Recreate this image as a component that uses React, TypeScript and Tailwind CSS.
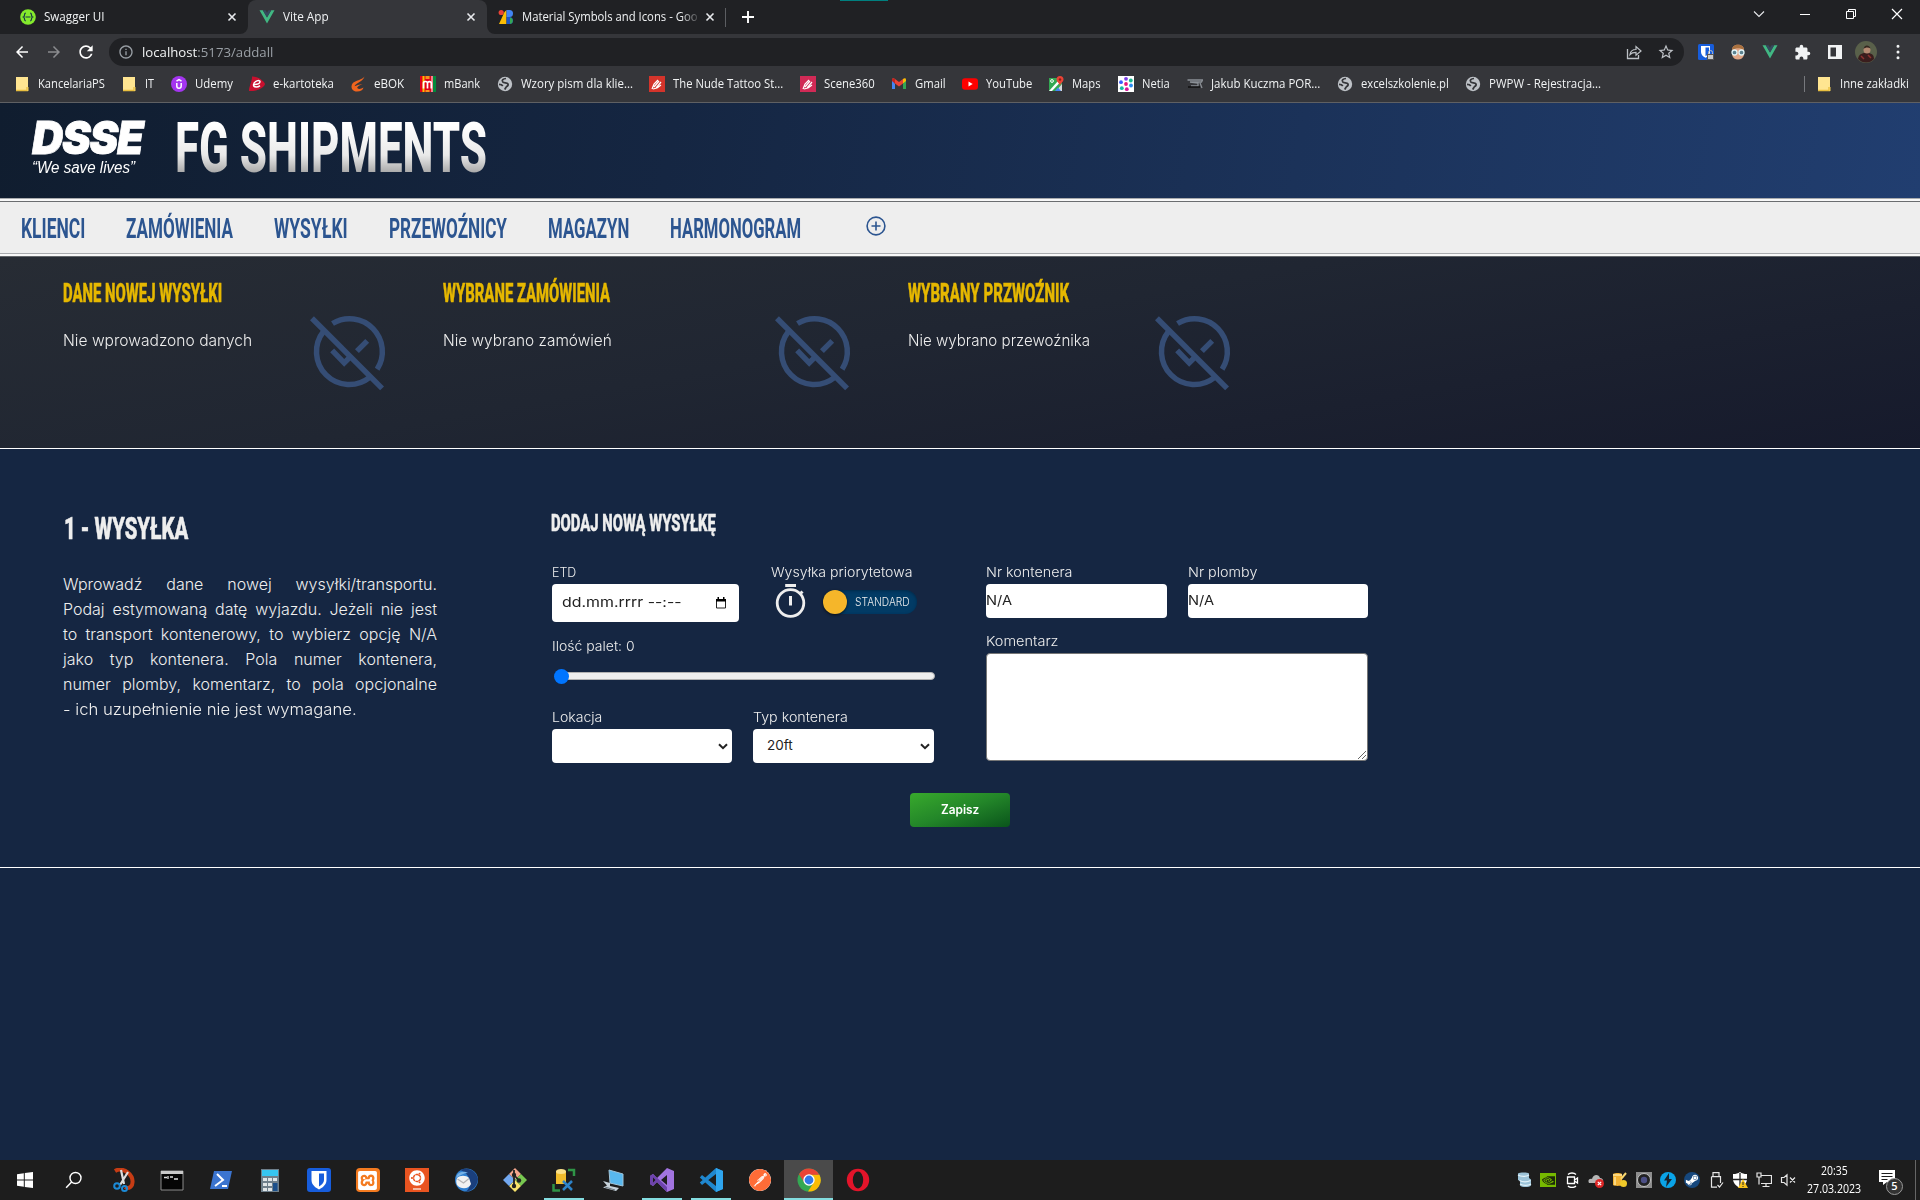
import React, { useLayoutEffect, useRef, useState } from 'react';
import { SiNvidia, SiPostman, SiXampp } from 'react-icons/si';
import { FaSteamSymbol, FaUbuntu } from 'react-icons/fa';
import { MdRefresh, MdArrowBack, MdArrowForward, MdStarBorder, MdInfoOutline, MdExtension } from 'react-icons/md';

/* Condenses or widens a single line of text so that it fills exactly `w` pixels. */
function Fit({ w, className = '', children }: { w: number; className?: string; children: React.ReactNode }) {
  const ref = useRef<HTMLSpanElement>(null);
  const [k, setK] = useState(1);
  useLayoutEffect(() => {
    if (ref.current) setK(w / ref.current.offsetWidth);
  }, [w]);
  return (
    <span className={'block shrink-0 whitespace-nowrap ' + className} style={{ width: w }}>
      <span ref={ref} className="inline-block origin-left whitespace-nowrap" style={{ transform: `scaleX(${k})` }}>
        {children}
      </span>
    </span>
  );
}

const Svg = ({ s = 16, vb = '0 0 16 16', className = '', children }: { s?: number; vb?: string; className?: string; children: React.ReactNode }) => (
  <svg width={s} height={s} viewBox={vb} fill="none" className={'block shrink-0 ' + className}>
    {children}
  </svg>
);

/* ---------- browser icons ---------- */
const Folder = () => (
  <Svg>
    <path d="M2 1h12v14H2z" fill="#ffe591" />
    <path d="M2 14.5h12M13 11v4" stroke="#e9bf3f" strokeWidth="1.3" />
    <path d="M13 11h1.5v4H13z" fill="#f3cd58" />
  </Svg>
);
const Globe = () => (
  <Svg>
    <circle cx="8" cy="8" r="7.2" fill="#bdc1c6" />
    <path d="M9 2.500c-3 .2-4.500 1.800-3.300 3.300 1.300 1.400 4.300.6 5.300 2.200.6 1.300-.6 2.200-1.600 2.800-.7.600-.9 1.800-1.800 2.700M2 8.300c1.800 0 3.200.5 3.800 1.700" stroke="#35363a" strokeWidth="1.7" />
  </Svg>
);
const Vue = () => (
  <Svg>
    <path d="M.5 1.200h3.300L8 8.400l4.200-7.200h3.300L8 14.600z" fill="#41b883" />
    <path d="M3.800 1.200h2.700L8 3.800l1.500-2.600h2.700L8 8.400z" fill="#35495e" />
  </Svg>
);
const Swagger = () => (
  <Svg>
    <circle cx="8" cy="8" r="7.8" fill="#85ea2d" />
    <path d="M5.8 4.200c-2.300 0-.4 3-2.300 3.800 1.900.8 0 3.800 2.300 3.800M10.200 4.200c2.300 0 .4 3 2.300 3.800-1.900.8 0 3.800-2.300 3.800M5.500 8h5" stroke="#173647" strokeWidth="1.200" />
  </Svg>
);
const Material = () => (
  <Svg>
    <circle cx="3.200" cy="3.500" r="2.600" fill="#ea4335" />
    <path d="M6.500 3 8.500 1v14H1z" fill="#fbbc04" />
    <path d="M8.500 1h3a3.500 3.500 0 0 1 0 7h-3z" fill="#4285f4" />
    <path d="M8.500 8h3a3.500 3.500 0 0 1 0 7h-3z" fill="#1a56c8" />
    <path d="M12 8.500a3.300 3.300 0 0 1 0 6.500z" fill="#34a853" />
  </Svg>
);
const Udemy = () => (
  <Svg>
    <circle cx="8" cy="8" r="8" fill="#a435f0" />
    <path d="M5.500 5.200 8 3.600l2.500 1.600M5.800 7v3c0 3 4.400 3 4.400 0V7" stroke="#fff" strokeWidth="1.500" />
  </Svg>
);
const Ekart = () => (
  <Svg>
    <path d="M3 .5c4-.6 12 4 13 7.500-1 4-8 7.500-16 7C-.6 12 3.500 4 3 .5z" fill="#c8102e" />
    <path d="M4.500 8.500c3 0 6.500-1 6.500-3C11 3.700 5 4.500 4.500 8.800c0 3 4.500 2.500 6.500.8" stroke="#fff" strokeWidth="1.500" />
  </Svg>
);
const Ebok = () => (
  <Svg>
    <path d="M14.500.5C11.500 5 1.500 4 1.500 10.500c0 3.500 2.500 5 5.500 5 3.500 0 6-1.500 6.500-4-2 1.500-5 1.800-6 .8s1-2.600 5-4c-3 .2-6.500 1.200-8 2C6 6.500 13 6 14.500.5z" fill="#f0641e" />
  </Svg>
);
const Mbank = () => (
  <Svg>
    <path d="M0 0h16v16H0z" fill="#e2001a" />
    <path d="M2.500 0h2v16h-2z" fill="#f7c600" />
    <path d="M5.500 0h4v3h-4zM5.500 14h4v2h-4z" fill="#f7941d" />
    <path d="M11.500 0h1v16h-1z" fill="#fff" />
    <path d="M13 0h3v16h-3z" fill="#008a3b" />
    <path d="M3.500 12.500V6.800C3.500 5 7.500 5 7.500 7.200v5.300M7.500 7.200C7.500 5 11.300 5 11.300 7.200v5.300" stroke="#fff" strokeWidth="1.700" />
  </Svg>
);
const Hand = ({ pink = false }: { pink?: boolean }) => (
  <Svg>
    <path d="M0 0h16v16H0z" fill={pink ? '#d12a56' : '#d4342b'} />
    <path d="m3 13 2-5 4-4M5 11l5-6M7 12l5-6M8 12l4-3M4 13l4-1" stroke="#fff" strokeWidth="1.200" />
  </Svg>
);
const Gmail = () => (
  <Svg>
    <path d="M1 4v9h3V7.500L1 4z" fill="#4285f4" />
    <path d="M15 4v9h-3V7.500z" fill="#34a853" />
    <path d="M1 3.500C1 2 3 2 4 3l4 3 4-3v4.500l-4 3-4-3z" fill="#ea4335" />
    <path d="M12 3c1-1 3-1 3 .5V5l-3 2.500z" fill="#fbbc04" />
    <path d="M1 3.500V5l3 2.500V3C3 2 1 2.500 1 3.500z" fill="#c5221f" />
  </Svg>
);
const Youtube = () => (
  <Svg>
    <rect x="0" y="2.200" width="16" height="11.500" rx="3" fill="#f00" />
    <path d="m6.500 5.500 4.200 2.400-4.200 2.500z" fill="#fff" />
  </Svg>
);
const Maps = () => (
  <Svg>
    <path d="M1 2h13v13H1z" fill="#34a853" />
    <path d="M14 8v7H8z" fill="#d5d9dc" />
    <path d="M1 15 10 5l2 1.500L4 15z" fill="#fff" />
    <path d="m7 15 3-3.500L13 15z" fill="#4285f4" />
    <circle cx="4" cy="5" r="1.400" stroke="#fff" />
    <path d="M12 0a3.500 3.500 0 0 0-3.500 3.500C8.500 6 11.500 7 12 10c.5-3 3.500-4 3.500-6.500A3.500 3.500 0 0 0 12 0z" fill="#ea4335" />
    <circle cx="12" cy="3.500" r="1.200" fill="#8a1f17" />
  </Svg>
);
const Netia = () => (
  <Svg>
    <path d="M0 0h16v16H0z" fill="#fff" />
    {[
      [8, 2.8, '#7b3fe4'], [12.8, 4.5, '#17b890'], [3, 6.2, '#3b5bfd'], [8, 8, '#e6177a'], [13, 9.5, '#2a8bf2'],
      [3.8, 12.2, '#14b8a6'], [8.8, 13.200, '#d4179a'],
    ].map(([x, y, c]) => (
      <circle key={`${x}-${y}`} cx={x} cy={y} r="1.900" fill={String(c)} />
    ))}
  </Svg>
);
const Jakub = () => (
  <Svg>
    <path d="M.5 4h15l-1 2H3l8 1v3H4M13 7l2 5" stroke="#8b9096" strokeWidth="1.300" />
    <path d="M1 11h12" stroke="#111" strokeWidth="1.500" />
  </Svg>
);

const bookmarks: { icon: React.ReactNode; text: string; w: number; slot: number }[] = [
  { icon: <Folder />, text: 'KancelariaPS', w: 67, slot: 107 },
  { icon: <Folder />, text: 'IT', w: 9, slot: 50 },
  { icon: <Udemy />, text: 'Udemy', w: 38, slot: 78 },
  { icon: <Ekart />, text: 'e-kartoteka', w: 61, slot: 101 },
  { icon: <Ebok />, text: 'eBOK', w: 30, slot: 70 },
  { icon: <Mbank />, text: 'mBank', w: 36, slot: 77 },
  { icon: <Globe />, text: 'Wzory pism dla klie...', w: 112, slot: 152 },
  { icon: <Hand />, text: 'The Nude Tattoo St...', w: 110, slot: 151 },
  { icon: <Hand pink />, text: 'Scene360', w: 51, slot: 91 },
  { icon: <Gmail />, text: 'Gmail', w: 31, slot: 71 },
  { icon: <Youtube />, text: 'YouTube', w: 46, slot: 86 },
  { icon: <Maps />, text: 'Maps', w: 29, slot: 70 },
  { icon: <Netia />, text: 'Netia', w: 28, slot: 69 },
  { icon: <Jakub />, text: 'Jakub Kuczma POR...', w: 109, slot: 150 },
  { icon: <Globe />, text: 'excelszkolenie.pl', w: 88, slot: 128 },
  { icon: <Globe />, text: 'PWPW - Rejestracja...', w: 112, slot: 140 },
];

const TabClose = ({ className = '' }: { className?: string }) => (
  <Svg s={16} className={className}>
    <path d="m4.500 4.500 7 7m0-7-7 7" stroke="#e8eaed" strokeWidth="1.600" />
  </Svg>
);

function TabStrip() {
  return (
    <div className="relative flex h-[34px] bg-[#202124] text-xs text-[#f1f3f4]">
      <div className="absolute left-[840px] top-0 h-px w-12 bg-[#00807f]" />
      <div className="flex w-[248px] items-center pl-5">
        <Swagger />
        <Fit w={60} className="ml-2">Swagger UI</Fit>
        <TabClose className="ml-[120px]" />
      </div>
      <div className="relative flex w-[239px] items-center rounded-t-lg bg-[#35363a] pl-[11px]">
        <Vue />
        <Fit w={46} className="ml-2">Vite App</Fit>
        <TabClose className="ml-[134px]" />
        <Svg s={8} vb="0 0 8 8" className="absolute -left-2 bottom-0"><path d="M8 0v8H0a8 8 0 0 0 8-8z" fill="#35363a" /></Svg>
        <Svg s={8} vb="0 0 8 8" className="absolute -right-2 bottom-0"><path d="M0 0v8h8a8 8 0 0 1-8-8z" fill="#35363a" /></Svg>
      </div>
      <div className="flex w-[238px] items-center pl-[11px]">
        <Material />
        <div className="ml-2 w-[176px] [mask-image:linear-gradient(90deg,#000_90%,transparent_102%)]">
          <Fit w={176}>Material Symbols and Icons - Goo</Fit>
        </div>
        <TabClose className="ml-1" />
      </div>
      <div className="mt-2 h-[19px] w-px bg-[#5c5e62]" />
      <Svg s={16} className="ml-[14px] mt-[9px]"><path d="M8 2v12M2 8h12" stroke="#fff" strokeWidth="1.900" /></Svg>
      <div className="ml-auto flex h-7 items-center">
        <Svg s={12} vb="0 0 12 12" className="mr-[34px]"><path d="m1 3.500 5 5 5-5" stroke="#e8eaed" strokeWidth="1.100" /></Svg>
        <Svg s={12} vb="0 0 12 12" className="mr-[34px]"><path d="M1 6.500h10" stroke="#fff" /></Svg>
        <Svg s={12} vb="0 0 12 12" className="mr-[34px]"><path d="M1.500 3.500h7v7h-7zM3.500 3.500v-2h7v7h-2" stroke="#fff" /></Svg>
        <Svg s={12} vb="0 0 12 12" className="mr-[17px]"><path d="m1 1 10 10M11 1 1 11" stroke="#fff" strokeWidth="1.200" /></Svg>
      </div>
    </div>
  );
}

function AddressBar() {
  return (
    <div className="flex h-9 items-center bg-[#35363a] text-white">
      <MdArrowBack className="ml-[13px] size-[18px]" />
      <MdArrowForward className="ml-[14px] size-[18px] text-[#8b8c8f]" />
      <MdRefresh className="ml-[13px] size-5" />
      <div className="ml-[13px] flex h-7 w-[1575px] items-center rounded-full bg-[#202124]">
        <MdInfoOutline className="ml-[9px] size-4 text-[#9aa0a6]" />
        <Fit w={131} className="ml-2 mt-px text-[13px] text-[#9aa0a6]">
          <span className="text-[#f1f3f4]">localhost</span>:5173/addall
        </Fit>
        <Svg className="ml-auto mr-[15px]">
          <path d="M1.500 5v9.500h11V11" stroke="#bdc1c6" strokeWidth="1.300" />
          <path d="M4 10.500c.5-3.500 2.500-5 6-5V2.500L15 7l-5 4.200V8.300c-2.500 0-4.500.5-6 2.200z" stroke="#bdc1c6" strokeWidth="1.200" />
        </Svg>
        <MdStarBorder className="mr-[9px] size-[18px] text-[#bdc1c6]" />
      </div>
      <div className="ml-[14px] flex items-center gap-4">
        <Svg>
          <rect width="16" height="16" rx="1.500" fill="#175ddc" />
          <path d="M3 2h9v6c0 3-3 5-4.500 5.700C5 12.700 3 10.500 3 8z" fill="#fff" />
          <path d="M7.500 3.500H11V8c0 2-2 3.500-3.500 4z" fill="#175ddc" />
          <path d="M9 10h7v6H9z" fill="#555" /><path d="M10.500 10V8.500a2 2 0 0 1 4 0V10" stroke="#bbb" />
          <path d="M10 11h5v4h-5z" fill="#ccc" />
        </Svg>
        <Svg>
          <path d="M2 6c0-7 12-7 12 0v5c-1 3-3 4.500-6 4.500S3 14 2 11z" fill="#e0a585" />
          <path d="M2 6c0-7 12-7 12 0C10 3.500 6 4 2 6z" fill="#a9713f" />
          <circle cx="4.500" cy="8.500" r="2.500" fill="#5c8290" stroke="#dff3f7" strokeWidth="1.300" />
          <circle cx="11.500" cy="8.500" r="2.500" fill="#5c8290" stroke="#dff3f7" strokeWidth="1.300" />
        </Svg>
        <Vue />
        <MdExtension className="size-[17px] text-[#f1f3f4]" />
        <Svg><path d="M1 1h14v14H1z" fill="#f1f3f4" /><path d="M3.500 3.500H9v9H3.500z" fill="#35363a" /></Svg>
      </div>
      <Svg s={22} vb="0 0 22 22" className="ml-3">
        <circle cx="11" cy="11" r="11" fill="#59604a" />
        <path d="M3 18c1-5 3-5 6-6l5 0c4 1 5 3 5 6-4 4.500-11 5-16 0z" fill="#3a1d1d" />
        <circle cx="12" cy="9" r="3.500" fill="#b58a72" /><path d="M8.500 8c1-5 6-4 7-.5-2-1.500-5-1.500-7 .5z" fill="#33271f" />
        <path d="M6 15l3 3m4-4 3 3" stroke="#8d3230" strokeWidth="1.500" />
      </Svg>
      <Svg className="ml-[13px]"><path d="M8 2.200v.1M8 8v.1M8 13.700v.1" stroke="#f1f3f4" strokeWidth="3" strokeLinecap="round" /></Svg>
    </div>
  );
}

function Bookmarks() {
  return (
    <div className="flex h-8 items-start bg-[#35363a] pl-[14px] text-xs text-[#f1f3f4]">
      {bookmarks.map((b) => (
        <div key={b.text} className="flex h-7 shrink-0 items-center gap-2" style={{ width: b.slot }}>
          {b.icon}
          <Fit w={b.w}>{b.text}</Fit>
        </div>
      ))}
      <div className="ml-auto mr-[11px] flex h-7 items-center">
        <div className="mr-[11px] h-4 w-px bg-[#77797d]" />
        <Folder />
        <Fit w={69} className="ml-2">Inne zakładki</Fit>
      </div>
    </div>
  );
}

/* ---------- application ---------- */
function AppHeader() {
  return (
    <header className="flex h-[95px] shrink-0 bg-[linear-gradient(100deg,#101d2f_0%,#152642_35%,#213e70_100%)]">
      <div className="ml-8 w-[143px] pt-[13px]">
        <Fit w={111} className="h-[42px] font-['Inter'] text-[46px] font-black italic leading-[42px] tracking-[-0.03em] text-white [-webkit-text-stroke:0.8px_#fff]">DSSE</Fit>
        <Fit w={103} className="font-['Liberation_Sans'] text-base italic leading-5 text-white">“We save lives”</Fit>
      </div>
      <Fit w={312} className="h-[90px] font-['Roboto'] text-[71px] font-extrabold leading-[90px] [&>span]:bg-[linear-gradient(180deg,#fff_25%,#e9e9e9_58%,#a0a0a0_80%)] [&>span]:bg-clip-text [&>span]:text-transparent">
        FG SHIPMENTS
      </Fit>
    </header>
  );
}

const navItems: [string, number, string][] = [
  ['KLIENCI', 64, 'mr-[41px]'],
  ['ZAMÓWIENIA', 107, 'mr-[41px]'],
  ['WYSYŁKI', 74, 'mr-[41px]'],
  ['PRZEWOŹNICY', 118, 'mr-[41px]'],
  ['MAGAZYN', 81, 'mr-[41px]'],
  ['HARMONOGRAM', 131, 'mr-[65px]'],
];

function Nav() {
  return (
    <div className="shrink-0 border-b border-t border-b-[#62666a] border-t-[#a9abae] bg-[#f8f8f8] py-[2px]">
      <nav className="flex h-[53px] border-b border-t border-b-[#a9abae] border-t-[#6b6d70] bg-[#eee] pl-[21px] pt-[11px] font-['Roboto'] text-[27px] font-bold leading-[32px] text-[#2c5590]">
        {navItems.map(([t, w, m]) => (
          <Fit key={t} w={w} className={m}>{t}</Fit>
        ))}
        <Svg s={20} vb="0 0 20 20" className="mt-[3px]">
          <circle cx="10" cy="10" r="8.900" stroke="#2c5590" strokeWidth="1.600" />
          <path d="M10 5.500v9M5.500 10h9" stroke="#2c5590" strokeWidth="1.600" />
        </Svg>
      </nav>
    </div>
  );
}

const Unpublished = () => (
  <Svg s={85} vb="-12 -12 24 24">
    <g stroke="#354d75" strokeWidth="1.550">
      <path d="M-4.800-7.900A9.250 9.250 0 0 1 7.800 5" />
      <path d="M-7.300-5.700A9.250 9.250 0 0 0 5.700 7.300" />
      <path d="M-10.600-9.400 9.200 10.400" />
      <path d="M-4.900-.3-1.500 3.200.3 1.400M2.100-.1 5-3" />
    </g>
  </Svg>
);

const summary: { title: string; tw: number; text: string; w: number; col: string }[] = [
  { title: 'DANE NOWEJ WYSYŁKI', tw: 159, text: 'Nie wprowadzono danych', w: 189, col: 'w-[243px]' },
  { title: 'WYBRANE ZAMÓWIENIA', tw: 167, text: 'Nie wybrano zamówień', w: 169, col: 'w-[328px]' },
  { title: 'WYBRANY PRZWOŹNIK', tw: 161, text: 'Nie wybrano przewoźnika', w: 182, col: 'w-[243px]' },
];

function Summary() {
  return (
    <section className="flex h-48 shrink-0 gap-[52px] border-b border-white bg-[linear-gradient(170deg,#272c34_0%,#202632_45%,#161a2c_100%)] pl-16 pt-5">
      {summary.map((s) => (
        <div key={s.title} className="flex">
          <div className={'-ml-px mr-px ' + s.col}>
            <Fit w={s.tw} className="mt-px font-['Roboto'] text-[25px] font-extrabold leading-[32px] text-[#e6b800] [-webkit-text-stroke:0.5px_#e6b800]">{s.title}</Fit>
            <Fit w={s.w} className="mt-[19px] font-['Inter'] text-[15.500px] font-light leading-6 text-[#eee]">{s.text}</Fit>
          </div>
          <div className="pt-8">
            <Unpublished />
          </div>
        </div>
      ))}
    </section>
  );
}

const Label = ({ w, children, className = '' }: { w: number; children: React.ReactNode; className?: string }) => (
  <Fit w={w} className={"font-['Inter'] text-[13.500px] font-light leading-5 text-[#eee] " + className}>{children}</Fit>
);

const Chevron = () => (
  <Svg s={10} vb="0 0 10 10" className="ml-auto mr-1"><path d="m1 3.200 4 4 4-4" stroke="#222" strokeWidth="2" /></Svg>
);

const helpLines = [
  'Wprowadź dane nowej wysyłki/transportu.',
  'Podaj estymowaną datę wyjazdu. Jeżeli nie jest',
  'to transport kontenerowy, to wybierz opcję N/A',
  'jako typ kontenera. Pola numer kontenera,',
  'numer plomby, komentarz, to pola opcjonalne',
];

function ShipmentForm() {
  return (
    <section className="h-[419px] shrink-0 border-b border-white bg-[#152642]">
      <div className="flex pl-16">
        <div className="w-[488px] pt-[59px]">
          <Fit w={124} className="font-['Roboto'] text-[32px] font-extrabold leading-[40px] text-[#eee] [-webkit-text-stroke:0.6px_#eee]">1 - WYSYŁKA</Fit>
          <div className="mt-6 w-[373px] font-['Inter'] text-base font-light leading-[25px] text-[#eee]">
            {helpLines.map((l) => (
              <div key={l} className="-ml-px whitespace-nowrap [text-align-last:justify]">{l}</div>
            ))}
            <Fit w={294} className="-ml-px">- ich uzupełnienie nie jest wymagane.</Fit>
          </div>
        </div>

        <div className="w-[434px] pt-[58px]">
          <Fit w={165} className="-ml-px font-['Roboto'] text-[24.500px] font-extrabold leading-[32px] text-[#eee] [-webkit-text-stroke:0.5px_#eee]">DODAJ NOWĄ WYSYŁKĘ</Fit>
          <div className="mt-[23px] flex">
            <div className="w-[219px]">
              <Label w={24}>ETD</Label>
              <div className="mt-[2px] flex h-[38px] w-[187px] items-center rounded bg-white pl-[10px] text-[#222]">
                <Fit w={119} className="mt-[-2px] font-['Inter'] text-[13.500px] leading-5">dd.mm.rrrr --:--</Fit>
                <Svg s={12} vb="0 0 12 12" className="ml-auto mr-3">
                  <path d="M1.500 2.500h9v8.500h-9z" stroke="#222" /><path d="M1 2h10v2.500H1zM2.500 0H4v2H2.500zM8 0h1.500v2H8z" fill="#000" />
                </Svg>
              </div>
            </div>
            <div>
              <Label w={141}>Wysyłka priorytetowa</Label>
              <div className="flex">
                <Svg s={36} vb="0 0 36 36" className="ml-px">
                  <circle cx="18.500" cy="21" r="13.300" stroke="#eee" strokeWidth="2.800" />
                  <path d="M13.200 3.500h10.800M18.500 14v9.500M27.500 12.500l3-3" stroke="#eee" strokeWidth="3" />
                </Svg>
                <div className="ml-[15px] mt-2 flex h-6 w-[94px] items-center rounded-full bg-[#023b65] shadow-[inset_0_1px_3px_#012a4a]">
                  <div className="size-6 rounded-full bg-[#f5b62a] shadow-[0_1px_3px_#000a]" />
                  <Fit w={55} className="ml-2 font-['Inter'] text-[11px] font-light text-[#eee]">STANDARD</Fit>
                </div>
              </div>
            </div>
          </div>
          <Label w={83} className="mt-[14px]">Ilość palet: 0</Label>
          <div className="ml-[2px] mt-[12px] flex h-4 w-[381px] items-center">
            <div className="z-10 size-[15px] shrink-0 rounded-full bg-[#0075ff]" />
            <div className="-ml-2 h-2 flex-1 rounded-full border border-[#b2b2b2] bg-[#efefef]" />
          </div>
          <div className="mt-[23px] flex">
            <div className="w-[201px]">
              <Label w={50}>Lokacja</Label>
              <div className="mt-[2px] flex h-[34px] w-[180px] items-center rounded bg-white"><Chevron /></div>
            </div>
            <div>
              <Label w={95}>Typ kontenera</Label>
              <div className="mt-[2px] flex h-[34px] w-[181px] items-center rounded bg-white pl-[14px] text-[#222]">
                <Fit w={26} className="mt-[-2px] font-['Inter'] text-[13.500px] leading-5">20ft</Fit>
                <Chevron />
              </div>
            </div>
          </div>
        </div>

        <div className="pt-[113px]">
          <div className="flex">
            <div className="w-[202px]">
              <Label w={86}>Nr kontenera</Label>
              <div className="mt-[2px] h-[34px] w-[181px] rounded bg-white pt-[6px] text-[#222]">
                <Fit w={26} className="font-['Inter'] text-[13.500px] leading-5">N/A</Fit>
              </div>
            </div>
            <div>
              <Label w={69}>Nr plomby</Label>
              <div className="mt-[2px] h-[34px] w-[180px] rounded bg-white pt-[6px] text-[#222]">
                <Fit w={26} className="font-['Inter'] text-[13.500px] leading-5">N/A</Fit>
              </div>
            </div>
          </div>
          <Label w={72} className="mt-[13px]">Komentarz</Label>
          <div className="mt-[2px] flex h-[108px] w-[382px] items-end justify-end rounded border border-[#767676] bg-white">
            <Svg s={10} vb="0 0 10 10"><path d="M1 9 9 1M5 9l4-4" stroke="#555" strokeWidth=".9" /></Svg>
          </div>
        </div>
      </div>
      <div className="mx-auto mt-[30px] flex h-[34px] w-[100px] items-center justify-center rounded bg-[linear-gradient(160deg,#36a62c_5%,#238629_50%,#0a541b_100%)]">
        <Fit w={38} className="font-['Inter'] text-[12.500px] font-semibold leading-5 text-white">Zapisz</Fit>
      </div>
    </section>
  );
}

/* ---------- taskbar ---------- */
const taskIcons: { n: string; el: React.ReactNode; on?: boolean; cur?: boolean }[] = [
  { n: 'win', el: <Svg s={18} vb="0 0 18 18"><path d="M1 3.200 7.800 2.200v6.300H1zM8.800 2 17 1v7.500H8.800zM1 9.500h6.800v6.300L1 14.800zM8.800 9.500H17V17l-8.200-1z" fill="#fff" /></Svg> },
  { n: 'find', el: <Svg s={18} vb="0 0 18 18"><circle cx="10.500" cy="7" r="5.500" stroke="#fff" strokeWidth="1.400" /><path d="m6.600 11-5.500 5.800" stroke="#fff" strokeWidth="1.500" /></Svg> },
  { n: 'snip', el: <Svg s={24} vb="0 0 24 24"><path d="M4 3c8-5 20 4 17 14-3 5-7 2-7 2" stroke="#c63c14" strokeWidth="4" /><path d="m10 2 3 14M17 4 9 17" stroke="#ddd" strokeWidth="2.200" /><circle cx="6" cy="18" r="2.800" stroke="#1c8ad6" strokeWidth="2" /><circle cx="13.500" cy="20.500" r="2.500" stroke="#1c8ad6" strokeWidth="2" /></Svg> },
  { n: 'cmd', el: <Svg s={24} vb="0 0 24 24"><path d="M1 3h22v19H1z" fill="#050505" stroke="#8c8c8c" /><path d="M1 3h22v3H1z" fill="#c9c9c9" /><path d="M4 9.500h3M8 8v3M10 9h3M14 11h4" stroke="#ddd" strokeWidth="1.300" /></Svg> },
  { n: 'ps', el: <Svg s={24} vb="0 0 24 24"><path d="M5 3h18l-4 18H1z" fill="#3b74cf" /><path d="m8 6 6 6-8 6M13 18h5" stroke="#fff" strokeWidth="2" /></Svg> },
  { n: 'calc', el: <Svg s={24} vb="0 0 24 24"><path d="M3 1h18v23H3z" fill="#6e7f8b" /><path d="M4 2h16v6H4z" fill="#36c5f0" /><path d="M5 10h4v3H5zM10 10h4v3h-4zM5 15h4v3H5zM10 15h4v3h-4zM5 20h4v3H5zM10 20h4v3h-4zM15 10h4v3h-4z" fill="#dfe5e8" /><path d="M15 15h4.500v8H15z" fill="#1b4f8a" /></Svg> },
  { n: 'bw', el: <Svg s={24} vb="0 0 24 24"><rect width="24" height="24" rx="3" fill="#175ddc" /><path d="M4.500 3h15v9c0 5-4.500 8-7.500 9.500C9 20 4.500 17 4.500 12z" fill="#fff" /><path d="M12 5.500h5V12c0 3-2.500 5-5 6.500z" fill="#175ddc" /></Svg> },
  { n: 'xampp', el: <div className="flex size-6 items-center justify-center rounded bg-[#f47b20]"><SiXampp className="size-[19px] text-white" /></div> },
  { n: 'ubuntu', el: <div className="flex h-6 w-6 flex-col items-center bg-[#e95420] pt-[2px]"><FaUbuntu className="size-4 text-white" /><div className="mt-[2px] h-[2px] w-2 bg-[#f7b59c]" /></div> },
  { n: 'tb', el: <Svg s={24} vb="0 0 24 24"><circle cx="12.500" cy="12" r="11.500" fill="#2f7fd0" /><path d="M6 2c9-4 17 2 18 9-1 8-6 12-12 12.500C19 18 17 6 6 2z" fill="#1a3f7d" /><path d="M3 10c3-3 9-3 12 0l2 6c-2 5-10 6-14 1-1-2-1-5 0-7z" fill="#f2f2f2" /><path d="m3.500 11 6 4 5.500-4.500" stroke="#b5b5b5" strokeWidth="1.200" /><path d="M3 7c3-4 8-4 11-2-4 0-8 2-12 5z" fill="#76b2e6" /></Svg> },
  { n: 'git', el: <Svg s={24} vb="0 0 24 24"><path d="m12 0 6 6-6 6-6-6z" fill="#f4a58c" /><path d="m18 6 6 6-6 6-6-6z" fill="#78c850" /><path d="m12 12 6 6-6 6-6-6z" fill="#f8e36b" /><path d="m6 6 6 6-6 6-6-6z" fill="#72a8f0" /><path d="M11 2v17M11 7l5 5.500" stroke="#222" strokeWidth="1.800" /><circle cx="11" cy="7" r="2.200" fill="#222" /><circle cx="16" cy="12.500" r="2.200" fill="#222" /><circle cx="11" cy="18" r="2.200" fill="#222" /></Svg> },
  { n: 'ssms', on: true, el: <Svg s={24} vb="0 0 24 24"><path d="M4 3h10v13H4z" fill="#f1bd2c" /><ellipse cx="9" cy="3.500" rx="5" ry="2.500" fill="#fbe18a" /><path d="M16 2h6v6M1.500 16v6.500H8" stroke="#2f9446" strokeWidth="2.500" /><path d="m11 13 9 9m0-9-9 9" stroke="#2d83c9" strokeWidth="2.500" /></Svg> },
  { n: 'pc', el: <Svg s={24} vb="0 0 24 24"><path d="m8 2 14 4v12L9 15z" fill="#58b8ee" stroke="#9fc4da" /><path d="m2 13 7 2 0 3 9 2-3 3-13-3.500 4-2z" fill="#c7d2da" /><path d="m4 19 10 3" stroke="#69757d" /></Svg> },
  { n: 'vs', on: true, el: <Svg s={24} vb="0 0 24 24"><path d="M17 0 24 3v18l-7 3L7 14l-4 4-3-2V8l3-2 4 4z" fill="#a274e0" /><path d="M0 8l3-2 14 13v5L7 14l-4 4-3-2z" fill="#6e44ad" /><path d="M17 7v10l-6-5zM3 9.500v5L5.500 12z" fill="#1d1d1d" /></Svg> },
  { n: 'code', on: true, el: <Svg s={24} vb="0 0 24 24"><path d="M17 0 24 3v18l-7 3L0.800 9.500 3 7l14 11V6L3 17 .8 14.500z" fill="#1f87cf" /><path d="m17 0 7 3v18l-7 3z" fill="#2fa5ee" /></Svg> },
  { n: 'postman', el: <SiPostman className="size-[22px] rounded-full bg-white text-[#ff6c37]" /> },
  { n: 'chrome', on: true, cur: true, el: <Svg s={24} vb="0 0 24 24"><circle cx="12" cy="12" r="11.500" fill="#34a853" /><path d="M12 6.500h10.300A11.500 11.500 0 0 1 11 23.500L17 14z" fill="#fbbc05" /><path d="M2 6.200a11.500 11.500 0 0 1 20.200.5H12L7 14z" fill="#ea4335" /><circle cx="12" cy="12" r="5.700" fill="#fff" /><circle cx="12" cy="12" r="4.400" fill="#3278e8" /></Svg> },
  { n: 'opera', el: <Svg s={24} vb="0 0 24 24"><circle cx="12" cy="12" r="11.200" fill="#e3142a" /><ellipse cx="12" cy="12" rx="5.200" ry="8.500" fill="#1d1d1d" /></Svg> },
];

const tray: { n: string; el: React.ReactNode }[] = [
  { n: 'db', el: <Svg><path d="M2 1.500C4 .3 11 .3 13 1.500V6l2 1.500v6c-2 2-9 2-11 0V9L2 8z" fill="#9cc3d8" /><path d="M2 3c3 1.800 8 1.800 11 0M3.500 8.500c3 1.800 8 1.800 11 0M4 12c3 1.800 8 1.800 11 0" stroke="#e3f2f9" strokeWidth="1.400" /></Svg> },
  { n: 'nv', el: <div className="flex h-[14px] w-4 items-center justify-center bg-[#76b900]"><SiNvidia className="size-[13px] text-[#1d2a0a]" /></div> },
  { n: 'meet', el: <Svg><path d="M4 2.500c2-2 6-2 8 0M4 14c2 2 6 2 8 0M3.500 5h7v6.500h-7zM10.500 8l3-2v5l-3-2" stroke="#fff" strokeWidth="1.300" /></Svg> },
  { n: 'cloud', el: <Svg><path d="M1 11c-2-4 2-5 3-4 1-5 7-5 8-1 4 0 4 5 1 5z" fill="#b5b5b5" /><circle cx="11.500" cy="11.500" r="4.500" fill="#dc2626" /><path d="m9.800 9.800 3.400 3.400m0-3.400-3.400 3.400" stroke="#fff" strokeWidth="1.200" /></Svg> },
  { n: 'dbk', el: <Svg><path d="M1 2c2-1.200 7-1.200 9 0v11c-2 1.200-7 1.200-9 0z" fill="#f2b233" /><path d="M1 3h9M3 5v8" stroke="#fce39c" strokeWidth="1.500" /><path d="m14 1-5 6" stroke="#f7d66e" strokeWidth="2" /><circle cx="11.500" cy="11.500" r="3.500" fill="#f0c929" /></Svg> },
  { n: 'cam', el: <Svg><path d="M0 0h16v16H0z" fill="#8d8d8d" /><circle cx="8" cy="8" r="6.500" fill="#222" stroke="#c4c4c4" /><circle cx="8" cy="8" r="3.200" fill="#4c4f86" /></Svg> },
  { n: 'bolt', el: <Svg><circle cx="8" cy="8" r="8" fill="#0aa4e8" /><path d="M9 1 4 8.500h3L6 15l6-8H9z" fill="#18222b" /></Svg> },
  { n: 'steam', el: <div className="flex size-4 items-center justify-center rounded-full bg-[#16477c]"><FaSteamSymbol className="size-[14px] text-white" /></div> },
  { n: 'usb', el: <Svg><path d="M5 .7h6v4H5zM3.500 4.700h9V11M3.500 4.700v10.500H9M7 2.700h.1M9 2.700h.1M9.500 13l2 2 3.500-4.500" stroke="#e6e6e6" strokeWidth="1.200" /></Svg> },
  { n: 'shield', el: <Svg><path d="M8 0c2 1.500 4 2 7 2v5c0 4-3 7-7 9-4-2-7-5-7-9V2c3 0 5-.5 7-2z" fill="#fff" /><path d="M8 1v14M1 7.500h14" stroke="#222" strokeWidth="1.300" /><path d="m11 7 5 9H6z" fill="#f8c21c" /><path d="M11 10v3m0 1v1" stroke="#222" /></Svg> },
  { n: 'net', el: <Svg><path d="M5 3.500h10.500v8H5M1 1h4v4H1zM3 5v7.500M10 12v2.500M6.500 14.500h7" stroke="#e6e6e6" strokeWidth="1.200" /></Svg> },
  { n: 'mute', el: <Svg><path d="M1.500 5.500H4L7 2.800v10.400L4 10.500H1.500zM10 5.500l5 5m0-5-5 5" stroke="#e6e6e6" strokeWidth="1.200" /></Svg> },
];

function Taskbar() {
  return (
    <footer className="flex h-10 shrink-0 bg-[#1d1d1d]">
      {taskIcons.map((t) => (
        <div key={t.n} className={'flex h-10 w-[49px] shrink-0 flex-col items-center ' + (t.cur ? 'bg-[#4a4a4a]' : '')}>
          <div className="flex h-[38px] items-center pt-[2px]">{t.el}</div>
          {t.on && <div className={'h-[2px] bg-[#84dde0] ' + (t.cur ? 'w-full' : 'w-10')} />}
        </div>
      ))}
      <div className="ml-auto flex items-center">
        <div className="flex gap-2">
          {tray.map((t) => (
            <div key={t.n} className="flex size-4 items-center">{t.el}</div>
          ))}
        </div>
        <div className="ml-[10px] flex w-[56px] flex-col items-center text-xs leading-[18px] text-white">
          <Fit w={27}>20:35</Fit>
          <Fit w={54}>27.03.2023</Fit>
        </div>
        <div className="relative ml-[17px] mr-3 h-8 w-6">
          <Svg s={16} className="mt-[5px]"><path d="M0 1h16v12H8l-4 3v-3H0z" fill="#fff" /><path d="M2.500 4.500h11M2.500 7.500h11M2.500 10.500h6" stroke="#1d1d1d" strokeWidth="1.200" /></Svg>
          <div className="absolute left-[7px] top-[14px] flex size-[17px] items-center justify-center rounded-full border border-[#999] bg-[#333] text-[11px] font-semibold text-white">5</div>
        </div>
        <div className="mr-1 h-10 w-px bg-[#666]" />
      </div>
    </footer>
  );
}

export default function App() {
  return (
    <div className="flex h-[1200px] w-[1920px] flex-col overflow-hidden bg-[#152642] font-['Open_Sans',sans-serif]">
      <TabStrip />
      <AddressBar />
      <Bookmarks />
      <div className="h-px shrink-0 bg-[#5f6063]" />
      <AppHeader />
      <Nav />
      <Summary />
      <ShipmentForm />
      <div className="flex-1" />
      <Taskbar />
    </div>
  );
}
